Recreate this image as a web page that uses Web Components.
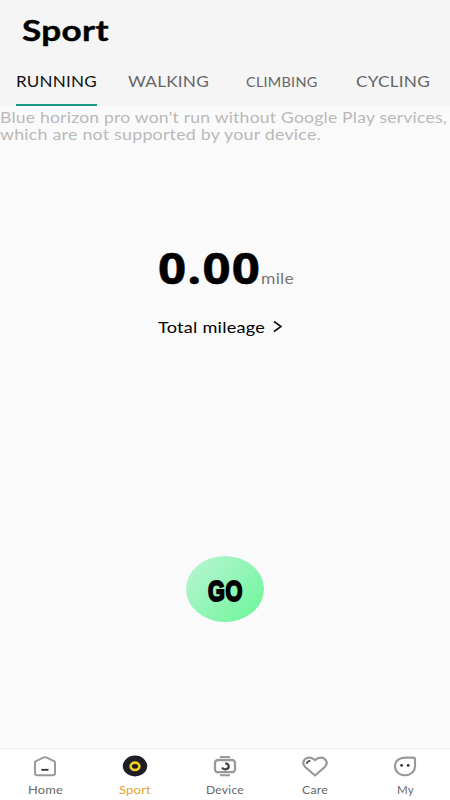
<!DOCTYPE html>
<html lang="en">
<head>
<meta charset="utf-8">
<title>Sport</title>
<style>
html,body{margin:0;height:100%;background:#fafafa;font-family:Lato,"Open Sans",sans-serif}
</style>
</head>
<body>
<sport-app></sport-app>
<script>
const define = (name, html) => customElements.define(name, class extends HTMLElement {
  connectedCallback() {
    if (this.shadowRoot) return;
    const root = this.attachShadow({mode: 'open'});
    const t = document.createElement('template');
    t.innerHTML = typeof html === 'function' ? html(this) : html;
    root.append(t.content.cloneNode(true));
  }
});

// A single line of text set to an exact advance width. "base" is the baseline within height "h".
define('wide-text', el => {
  const a = (n, d) => el.getAttribute(n) || d;
  const w = a('w'), h = a('h', 20);
  return `<style>:host{display:block;flex:none;width:${w}px;height:${h}px}
  svg{display:block;overflow:visible}
  text{font-family:${a('font', 'Lato')},sans-serif;font-size:${a('size')}px;font-weight:${a('weight', 400)};letter-spacing:${a('track', '.2')}px;fill:currentColor;stroke:currentColor;stroke-width:${a('stroke', 0)}}</style>
  <svg width="${w}" height="${h}"><text x="0" y="${a('base', 15)}" textLength="${w}" lengthAdjust="spacingAndGlyphs">${a('text')}</text></svg>`;
});

define('sport-tab', el => `<style>
:host{display:block;height:45px;box-sizing:border-box;padding-top:11px;color:#666;border-bottom:2px solid transparent}
:host([active]){color:#111;border-color:#199a88}
</style><slot></slot>`);

define('sport-header', `<style>
:host{display:block;height:106px;background:#f5f5f5;color:#000}
.title{height:61px;padding-left:22px;box-sizing:border-box}
nav{display:grid;grid-template-columns:112px 117.5px 110.5px 1fr;padding-left:16px}
sport-tab{justify-self:start}
</style>
<div class="title"><wide-text text="Sport" w="87" h="50" base="40.5" size="28.3" weight="700" stroke=".4" track=".3"></wide-text></div>
<nav>
<sport-tab active><wide-text text="RUNNING" w="81" size="15.5"></wide-text></sport-tab>
<sport-tab><wide-text text="WALKING" w="81" size="15.5"></wide-text></sport-tab>
<sport-tab><wide-text text="CLIMBING" w="71.5" size="13.3"></wide-text></sport-tab>
<sport-tab><wide-text text="CYCLING" w="74" size="15.5"></wide-text></sport-tab>
</nav>`);

define('service-notice', `<style>:host{display:block;padding-top:2px;height:38px;box-sizing:border-box;color:#b9b9b9}</style>
<wide-text text="Blue horizon pro won't run without Google Play services," w="447" h="17" base="14.5" size="15.5"></wide-text>
<wide-text text="which are not supported by your device." w="321" h="17" base="14.5" size="15.5"></wide-text>`);

define('mileage-readout', `<style>
:host{display:block;padding:106px 0 0 158px;color:#000}
.v{display:flex;height:50px}
.unit{color:#777}
.total{display:flex;align-items:flex-start;gap:8px;margin:17px 0 0}
svg{display:block;margin-top:3px}
</style>
<div class="v"><wide-text text="0.00" w="103" h="50" base="34" size="43" weight="700" font="'Open Sans'" stroke=".5" track="1"></wide-text>
<wide-text class="unit" text="mile" w="33" h="50" base="34" size="14.5"></wide-text></div>
<div class="total"><wide-text text="Total mileage" w="107" size="15" base="15.5"></wide-text>
<svg width="12" height="14" fill="none" stroke="#111" stroke-width="1.6"><path d="M1 1.5 8 6.5 1 11.5"/></svg></div>`);

define('go-button', `<style>
:host{display:flex;width:78px;height:66px;border-radius:50%;justify-content:center;align-items:center;background:linear-gradient(135deg,#b2f5ce 10%,#72f59e 90%);color:#000}
wide-text{padding-left:1px}
</style><wide-text text="GO" w="35" h="24" base="24" size="30" weight="700" font="'Liberation Sans Narrow','Liberation Sans'" stroke="2.1" track=".8"></wide-text>`);

const icons = {
home: `<path d="M19.5 9 27.2 5.3Q29 4.4 30.8 5.3L38.5 9Q39 9.3 39 10V20.8Q39 23 36.8 23H21.2Q19 23 19 20.8V10Q19 9.3 19.5 9Z" transform="translate(0 -.7)" fill="none" stroke="#999" stroke-width="2"/><path d="M25.3 16.8H32.5" stroke="#333" stroke-width="1.8"/>`,
sport: `<ellipse cx="29" cy="13" rx="12.2" ry="10.4" fill="#1e1e26"/><ellipse cx="29" cy="13.3" rx="4.4" ry="3.7" fill="none" stroke="#efcf22" stroke-width="2.6"/>`,
device: `<path d="M24 4H34M24 22.2H34" stroke="#999" stroke-width="2"/><rect x="19" y="7" width="20" height="12.2" rx="3" fill="none" stroke="#999" stroke-width="2.3"/><path d="M29.2 10.3A3.5 3 0 1 1 26 14.5" fill="none" stroke="#444" stroke-width="2.2"/>`,
care: `<path d="M29 22.5 19.2 14C14.8 9.5 19 4.4 23.5 4.6C26 4.7 27.3 5.7 29 7C30.7 5.7 32 4.7 34.5 4.6C39 4.4 43.2 9.5 38.8 14Z" fill="none" stroke="#999" stroke-width="2.3" stroke-linejoin="round"/><path d="M20.7 10.8Q21 8 24.4 7.8" fill="none" stroke="#555" stroke-width="1.7"/>`,
my: `<path d="M29 4.6H37.3Q39 4.6 39 6.3V13.2C39 18.5 34.7 22.2 29 22.2S19 18.5 19 13.2S23.3 4.6 29 4.6Z" fill="none" stroke="#999" stroke-width="2.1"/><circle cx="25.6" cy="12.4" r="1.4" fill="#333"/><circle cx="32.2" cy="12.4" r="1.4" fill="#333"/>`
};
define('nav-item', el => `<style>
:host{display:flex;flex-direction:column;align-items:center;padding-top:5px;color:#686868}
:host([active]){color:#e3a32e}
svg{display:block}
</style><svg width="58" height="26" viewBox="0 1 58 26">${icons[el.getAttribute('icon')]}</svg>
<wide-text text="${el.getAttribute('label')}" w="${el.getAttribute('w')}" h="18" base="14" size="11.3"></wide-text>`);

define('bottom-nav', `<style>
:host{display:grid;grid-template-columns:repeat(5,1fr);height:52px;box-sizing:border-box;background:#fff;border-top:1px solid #eee}
</style>
<nav-item icon="home" label="Home" w="35"></nav-item>
<nav-item icon="sport" label="Sport" w="32" active></nav-item>
<nav-item icon="device" label="Device" w="38"></nav-item>
<nav-item icon="care" label="Care" w="26"></nav-item>
<nav-item icon="my" label="My" w="17"></nav-item>`);

define('sport-app', `<style>
:host{display:flex;flex-direction:column;width:450px;height:800px;background:#fafafa;overflow:hidden}
go-button{margin:auto auto 126px}
</style>
<sport-header></sport-header>
<service-notice></service-notice>
<mileage-readout></mileage-readout>
<go-button></go-button>
<bottom-nav></bottom-nav>`);
</script>
</body>
</html>
